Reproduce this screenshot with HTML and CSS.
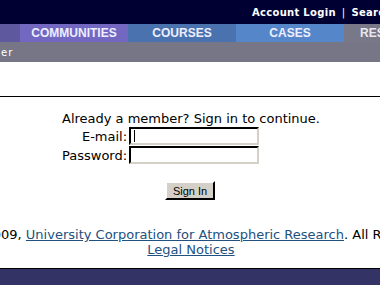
FILE: index.html
```html
<!DOCTYPE html>
<html>
<head>
<meta charset="utf-8">
<link rel="stylesheet" href="styles.css">
</head>
<body>
<div class="page">
  <header class="top"><span class="toplinks"><span>Account Login</span><span class="sep">|</span><span>Search</span></span></header>
  <nav class="nav">
    <span class="tab t0"></span>
    <span class="tab t1">COMMUNITIES</span>
    <span class="tab t2">COURSES</span>
    <span class="tab t3">CASES</span>
    <span class="tab t4">RESOURCES</span>
  </nav>
  <div class="sub"><span class="subtext">er</span></div>
  <div class="rule"></div>
  <main class="login">
    <form class="form">
      <p class="intro">Already a member? Sign in to continue.</p>
      <label class="lbl" for="em">E-mail:</label><input class="field caret" id="em" type="text">
      <label class="lbl" for="pw">Password:</label><input class="field" id="pw" type="password">
      <div class="actions"><button class="btn" type="button">Sign In</button></div>
    </form>
  </main>
  <footer class="foot">
    <div class="line"><span>Copyright © 2009, <a href="#">University Corporation for Atmospheric Research</a>. All Rights Reserved.</span></div>
    <div class="line"><span><a href="#">Legal Notices</a></span></div>
  </footer>
  <div class="bottom"></div>
</div>
</body>
</html>
```
FILE: styles.css
```css
html, body {
  margin: 0;
  padding: 0;
  background: #ffffff;
}
body {
  overflow: hidden;
  font-family: "DejaVu Sans", Verdana, sans-serif;
  font-size: 13px;
  color: #000;
}
.page {
  width: 380px;
  height: 285px;
  display: flex;
  flex-direction: column;
  overflow: hidden;
}
.top {
  height: 24px;
  background: #000033;
  display: flex;
  align-items: center;
  padding-left: 252px;
  white-space: nowrap;
  overflow: hidden;
}
.toplinks {
  display: flex;
  color: #ffffff;
  font-weight: bold;
  font-size: 10px;
  line-height: 12px;
  padding-top: 2px;
  letter-spacing: 0.3px;
}
.sep {
  margin: 0 6px;
  font-weight: normal;
}
.nav {
  height: 18px;
  display: flex;
  white-space: nowrap;
  overflow: hidden;
}
.tab {
  flex: 0 0 108px;
  display: flex;
  align-items: center;
  justify-content: center;
  font-family: "Liberation Sans", Arial, sans-serif;
  font-weight: bold;
  font-size: 12px;
  color: #eeeeff;
}
.t0 { flex-basis: 20px; background: #5e589e; }
.t1 { background: #7268c2; }
.t2 { background: #4a72ae; }
.t3 { background: #5686ca; }
.t4 { background: #787888; color: #e8e8ee; }
.sub {
  height: 20px;
  background: #767686;
  display: flex;
  align-items: center;
}
.subtext {
  color: #ffffff;
  font-size: 10px;
  padding-left: 1px;
  letter-spacing: 1px;
}
.rule {
  height: 1px;
  background: #000;
  margin-top: 34px;
}
.login {
  display: flex;
  justify-content: center;
  padding-top: 14px;
}
.form {
  display: grid;
  grid-template-columns: auto 1fr;
  width: 256px;
  row-gap: 1px;
  column-gap: 2px;
  align-items: center;
}
.intro {
  grid-column: 1 / 3;
  margin: 0;
  line-height: 15px;
  text-align: center;
  white-space: nowrap;
}
.lbl {
  text-align: right;
  line-height: 15px;
}
.field {
  width: 130px;
  height: 18px;
  box-sizing: border-box;
  margin: 0;
  padding: 0 3px;
  border: 2px inset #808080;
  border-top-color: #505050;
  border-left-color: #505050;
  border-right-color: #d4d0c8;
  border-bottom-color: #d4d0c8;
  background: #fff;
  font: 13px "DejaVu Sans", sans-serif;
  outline: none;
}
.caret {
  background: linear-gradient(#000, #000) 3px 1px / 1px 12px no-repeat, #fff;
}
.actions {
  grid-column: 1 / 3;
  display: flex;
  justify-content: center;
  padding-top: 16px;
}
.btn {
  width: 50px;
  height: 19px;
  margin: 0;
  padding: 0;
  background: #d4d0c8;
  border: 2px outset #ffffff;
  border-right-color: #404040;
  border-bottom-color: #404040;
  font-family: "Liberation Sans", Arial, sans-serif;
  font-size: 11px;
  color: #000;
}
.foot {
  padding-top: 27px;
  padding-left: 2px;
  display: flex;
  flex-direction: column;
  align-items: center;
}
.line {
  white-space: nowrap;
  line-height: 15px;
  display: flex;
  justify-content: center;
  width: 380px;
}
.line span {
  flex: none;
}
.foot a {
  color: #22507f;
}
.bottom {
  margin-top: auto;
  height: 16px;
  border-top: 1px solid #000;
  background: #333366;
}
```
